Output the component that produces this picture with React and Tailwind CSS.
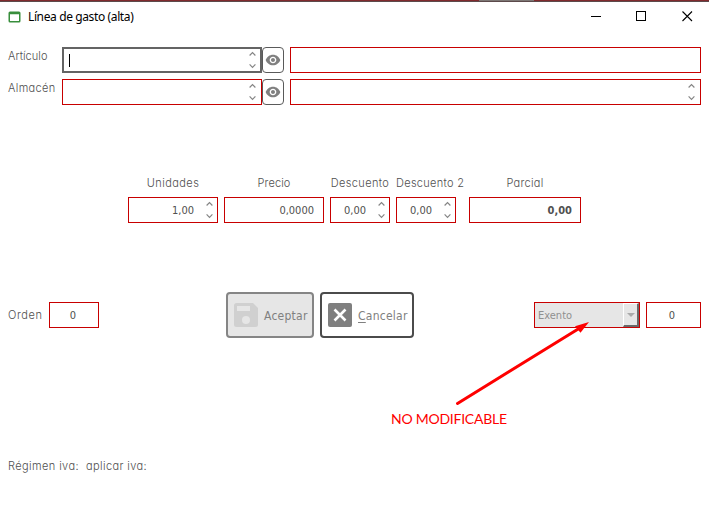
function Label({ children, className = "" }) {
  return (
    <span
      className={`block whitespace-pre font-['Inter'] text-[11px] leading-[14px] font-light text-[#4f4f4f] [font-feature-settings:'cv11'] ${className}`}
    >
      {children}
    </span>
  );
}

function Spinner() {
  return (
    <svg width="7" height="18" viewBox="0 0 7 18" fill="none" stroke="#858585" strokeWidth="1.2" className="shrink-0">
      <path d="M0.6 4.5 3.5 1.6 6.4 4.5" />
      <path d="M0.6 13.400 3.5 16.300 6.4 13.400" />
    </svg>
  );
}

function Field({ children, className = "", spinner = false }) {
  return (
    <div
      className={`flex h-[26px] shrink-0 items-center justify-end border border-[#c80000] bg-white font-['DejaVu_Sans_Condensed','DejaVu_Sans',sans-serif] text-[11px] text-[#505050] ${className}`}
    >
      <span className="pt-[2px]">{children}</span>
      {spinner && <Spinner />}
    </div>
  );
}

function EyeButton() {
  return (
    <button className="flex h-[26px] w-[22px] shrink-0 items-center justify-center rounded-[4px] border border-[#5a5a5a] bg-white">
      <svg width="16" height="16" viewBox="0 0 24 24" fill="#808080" className="shrink-0">
        <path d="M12 4C7 4 2.73 7.300 1 12c1.730 4.700 6 8 11 8s9.270-3.300 11-8c-1.730-4.700-6-8-11-8zM12 17c-2.760 0-5-2.240-5-5s2.240-5 5-5 5 2.240 5 5-2.240 5-5 5zm0-8c-1.660 0-3 1.340-3 3s1.340 3 3 3 3-1.340 3-3-1.340-3-3-3z" />
      </svg>
    </button>
  );
}

function TitleBar() {
  return (
    <header className="flex h-[29px] items-center pl-2">
      <svg width="13" height="12" viewBox="0 0 13 12" className="shrink-0">
        <path fill="#388e3c" fillRule="evenodd" d="M2 0.5h9a1.5 1.5 0 0 1 1.5 1.5v8a1.5 1.5 0 0 1-1.5 1.5H2A1.5 1.5 0 0 1 .5 10V2A1.5 1.5 0 0 1 2 .5zM2 3.3v6.8h9V3.3z" />
      </svg>
      <h1 className="ml-[7px] whitespace-nowrap font-['Noto_Sans'] text-[12px] leading-4 tracking-[-0.38px] text-black">
        Línea de gasto (alta)
      </h1>
      <svg width="102" height="12" viewBox="0 0 102 12" fill="none" stroke="#000" className="mr-[16px] mb-px ml-auto shrink-0">
        <path d="M0 6.5h10M45.5 1.5h9v9h-9z" shapeRendering="crispEdges" />
        <path d="m91.5 1.5 9.500 9.500m0-9.500-9.500 9.500" strokeWidth="1.1" />
      </svg>
    </header>
  );
}

export default function App() {
  return (
    <div className="relative flex h-[530px] w-[709px] flex-col overflow-hidden bg-white">
      <div className="flex h-[2px] shrink-0 flex-col">
        <div className="flex h-px bg-[#812a2d]">
          <div className="ml-[479px] w-[55px] bg-[#7d7775]" />
        </div>
        <div className="h-px bg-[#5c4a4b]" />
      </div>
      <TitleBar />

      <div className="mt-[16px] flex flex-col gap-[6px] pl-2">
        <div className="flex">
          <Label className="w-[54px] pt-[2px] tracking-[0.05px]">Artículo</Label>
          <div className="flex h-[26px] w-[200px] items-center justify-between border-2 border-[#646464] pr-[4px] pl-[5px]">
            <span className="h-[13px] w-px bg-black" />
            <Spinner />
          </div>
          <EyeButton />
          <Field className="ml-[6px] w-[411px]" />
        </div>
        <div className="flex">
          <Label className="w-[54px] pt-[2px] tracking-[0.35px]">Almacén</Label>
          <Field spinner className="w-[200px] pr-[5px]" />
          <EyeButton />
          <Field spinner className="ml-[6px] w-[411px] pr-[5px]" />
        </div>
      </div>

      <div className="mt-[71px] flex pl-[128px] text-center">
        <div className="w-[90px]">
          <Label className="mb-[7px] tracking-[0.45px]">Unidades</Label>
          <Field spinner className="w-[90px] gap-[12px] pr-[4px]">1,00</Field>
        </div>
        <div className="ml-[6px] w-[100px]">
          <Label className="mb-[7px] tracking-[0.1px]">Precio</Label>
          <Field className="w-[100px] pr-[9px]">0,0000</Field>
        </div>
        <div className="ml-[6px] w-[60px]">
          <Label className="mb-[7px] tracking-[0.35px]">Descuento</Label>
          <Field spinner className="w-[60px] gap-[12px] pr-[4px]">0,00</Field>
        </div>
        <div className="ml-[6px] w-[67px]">
          <Label className="mb-[7px] tracking-[0.3px]">Descuento 2</Label>
          <Field spinner className="w-[60px] gap-[12px] pr-[4px]">0,00</Field>
        </div>
        <div className="ml-[6px] w-[112px]">
          <Label className="mb-[7px] tracking-[0.3px]">Parcial</Label>
          <Field className="w-[112px] pr-[8px] font-bold">0,00</Field>
        </div>
      </div>

      <div className="mt-[69px] flex h-[46px] items-center pl-2">
        <Label className="w-[41px] tracking-[0.6px]">Orden</Label>
        <Field className="w-[50px] pr-[22px]">0</Field>
        <button className="ml-[127px] flex h-[46px] w-[88px] shrink-0 items-center rounded-[4px] border-2 border-[#858585] bg-[#e6e6e6] pl-[6px]">
          <svg width="24" height="24" viewBox="0 0 24 24" className="shrink-0">
            <path fill="#d0d0d0" fillRule="evenodd" d="M2.500 0H19l5 5v16.500a2.500 2.500 0 0 1-2.500 2.500h-19A2.500 2.500 0 0 1 0 21.500v-19A2.500 2.500 0 0 1 2.500 0zM3 3v5h13V3zm9 10a4 4 0 1 0 0 8 4 4 0 0 0 0-8z" />
          </svg>
          <span className="ml-[6px] pt-px font-['DejaVu_Sans_Condensed','DejaVu_Sans',sans-serif] text-[12px] tracking-[0.25px] text-[#808080]">Aceptar</span>
        </button>
        <button className="ml-[6px] flex h-[46px] w-[94px] shrink-0 items-center rounded-[4px] border-2 border-[#4b4b4b] bg-white pl-[6px]">
          <svg width="24" height="24" viewBox="0 0 24 24" className="shrink-0">
            <rect width="24" height="24" rx="2" fill="#7f7f7f" />
            <path d="m6.500 6.500 11 11m0-11-11 11" stroke="#fff" strokeWidth="2.600" />
          </svg>
          <span className="ml-[6px] pt-px font-['DejaVu_Sans_Condensed','DejaVu_Sans',sans-serif] text-[12px] tracking-[0.25px] text-[#808080]">
            <u className="underline-offset-2">C</u>ancelar
          </span>
        </button>
        <div className="ml-[120px] flex h-[26px] w-[106px] shrink-0 items-center justify-between border border-[#c80000] bg-[#e6e6e6] pl-[3px]">
          <span className="pt-[3px] font-['DejaVu_Sans_Condensed','DejaVu_Sans',sans-serif] text-[11px] text-[#909090]">Exento</span>
          <div className="flex h-6 w-4 items-center justify-center border-t border-r-2 border-b-2 border-l border-t-white border-r-[#696969] border-b-[#696969] border-l-white bg-[#e6e6e6]">
            <svg width="8" height="4" viewBox="0 0 8 4">
              <path d="M0 0h8L4 4z" fill="#aaa" />
            </svg>
          </div>
        </div>
        <Field className="ml-[6px] w-[55px] pr-[25px]">0</Field>
      </div>

      <Label className="mt-[121px] ml-2 tracking-[0.4px]">Régimen iva:  aplicar iva:</Label>

      <div className="absolute top-[320px] left-[391px]">
        <svg width="200" height="88" viewBox="391 320 200 88" className="block">
          <path d="M457.500 403.500 579 328.500" stroke="#fe0000" strokeWidth="3" strokeLinecap="round" />
          <path d="M589 322 575 326.200 580.500 332.800z" fill="#fe0000" />
        </svg>
        <span className="block pt-px whitespace-nowrap font-['Lato'] text-[14px] leading-[20px] tracking-[-0.25px] text-[#fe0000]">
          NO MODIFICABLE
        </span>
      </div>
    </div>
  );
}
